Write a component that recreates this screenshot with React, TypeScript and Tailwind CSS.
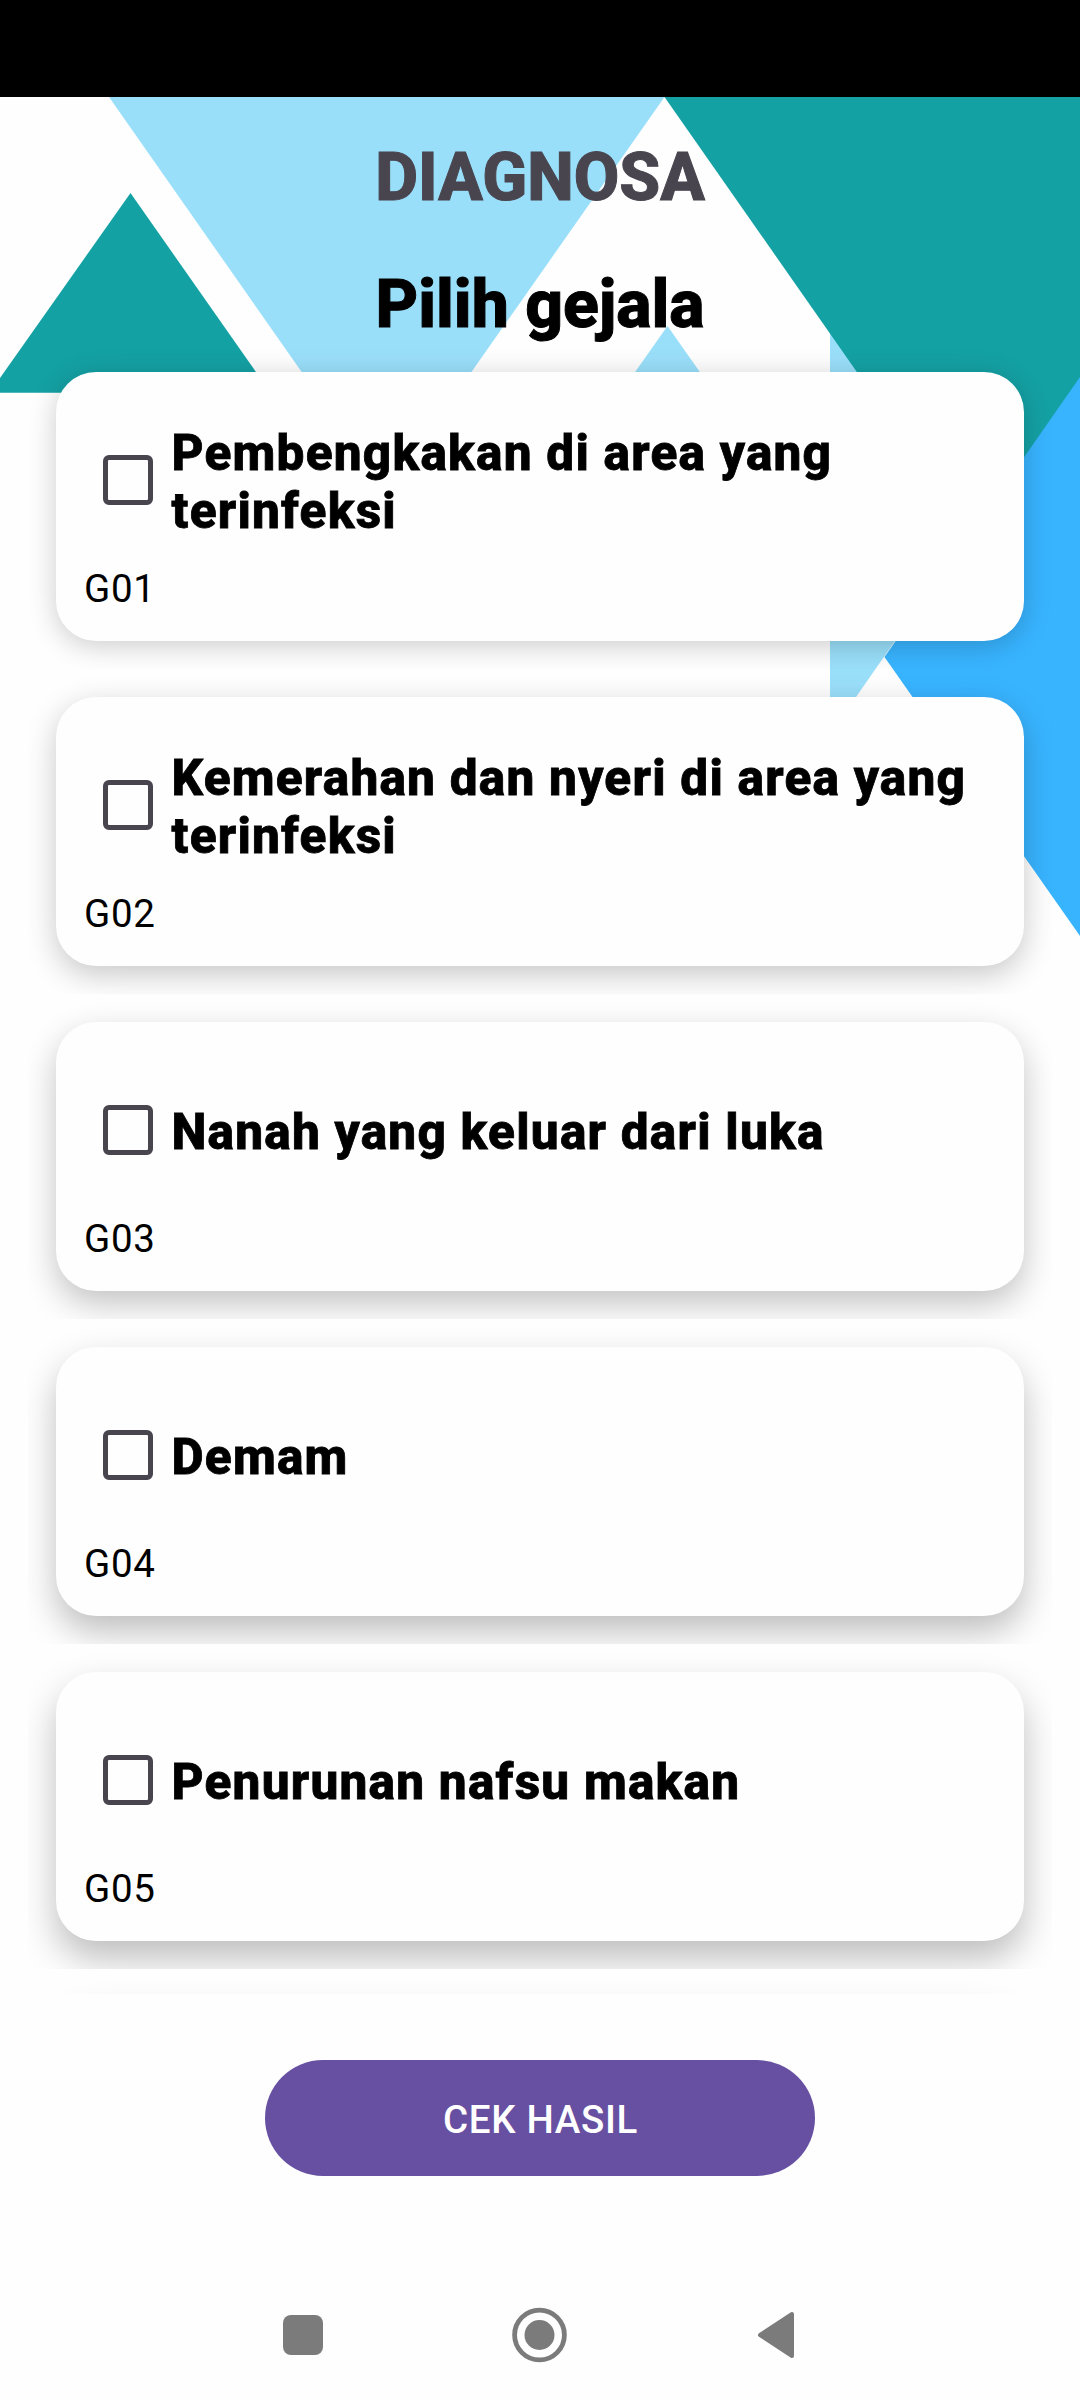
const symptoms = [
  { code: "G01", label: "Pembengkakan di area yang terinfeksi", shadow: "shadow-[0_5px_28px_rgba(0,0,0,0.2)]" },
  { code: "G02", label: "Kemerahan dan nyeri di area yang terinfeksi", shadow: "shadow-[0_9px_30px_rgba(0,0,0,0.215)]" },
  { code: "G03", label: "Nanah yang keluar dari luka", shadow: "shadow-[0_13px_33px_rgba(0,0,0,0.235)]" },
  { code: "G04", label: "Demam", shadow: "shadow-[0_16px_34px_rgba(0,0,0,0.25)]" },
  { code: "G05", label: "Penurunan nafsu makan", shadow: "shadow-[0_18px_36px_rgba(0,0,0,0.255)]" },
];

function Backdrop() {
  return (
    <svg className="absolute inset-x-0 top-0 -z-10" width="1080" height="1000" viewBox="0 0 1080 1000" aria-hidden="true">
      <path d="M109 97H664.5L386.5 493Z" fill="#9adffa" />
      <path d="M130.5 193L270.5 392.7H0V378Z" fill="#14a1a4" />
      <path d="M667.5 326L721 402H614Z" fill="#9adffa" />
      <path d="M830 320H900L950 562L856 697H830Z" fill="#9adffa" />
      <path d="M664.5 97H1080V400L980 548Z" fill="#14a1a4" />
      <path d="M1080 377V936L884.5 657Z" fill="#38b4ff" />
    </svg>
  );
}

function SymptomCard({ code, label, shadow }: { code: string; label: string; shadow: string }) {
  return (
    <li className="h-[325px] shrink-0 overflow-hidden p-7">
      <div className={`flex h-[269px] flex-col rounded-[40px] bg-[#fefefe] px-7 pt-7 ${shadow}`}>
        <label className="flex h-[166px] items-center pb-0.5">
          <span className="mb-1 ml-[19px] size-[50px] shrink-0 rounded-[6px] border-[5.5px] border-[#49454f]" />
          <span className="ml-[18.5px] text-[49.5px] leading-[58px] font-[850] tracking-[0.025em] [-webkit-text-stroke:0.8px_currentColor]">{label}</span>
        </label>
        <span className="text-[38.5px] leading-[45px] tracking-[0.0179em]">{code}</span>
      </div>
    </li>
  );
}

export default function App() {
  return (
    <div className="relative isolate flex h-[2400px] w-[1080px] flex-col overflow-hidden bg-[#fefefe] font-[Roboto,sans-serif] text-black">
      <Backdrop />
      <div className="h-[97px] shrink-0 bg-black" />
      <header className="flex h-[247px] shrink-0 flex-col items-center pt-[41.5px] font-[850] [-webkit-text-stroke:1px_currentColor]">
        <h1 className="text-[66px] leading-[78px] text-[#49454f] [-webkit-text-stroke-color:#49454f]">DIAGNOSA</h1>
        <h2 className="mt-[49px] text-[66px] leading-[78px]">Pilih gejala</h2>
      </header>
      <ul className="mx-7 flex h-[1650px] shrink-0 flex-col overflow-hidden">
        {symptoms.map((s) => (
          <SymptomCard key={s.code} {...s} />
        ))}
        <li className="shrink-0 px-7 pt-7">
          <div className="h-[269px] rounded-[40px] bg-[#fefefe] shadow-[0_20px_38px_rgba(0,0,0,0.16)]" />
        </li>
      </ul>
      <button className="mt-[66px] h-[116px] w-[550px] shrink-0 self-center rounded-full bg-[#6750a2] pt-0.5 pl-px text-[38.5px] leading-[45px] font-medium tracking-[0.0179em] text-white">
        CEK HASIL
      </button>
      <nav className="mt-auto flex h-[130px] shrink-0 items-center justify-between pr-[285px] pl-[282.5px]">
        <span className="size-[40px] rounded-[8px] bg-[#7b7b7b]" />
        <svg className="ml-[-1px]" width="56" height="56" viewBox="0 0 56 56" fill="none">
          <circle cx="28.5" cy="28" r="24.9" stroke="#7b7b7b" strokeWidth="4.8" />
          <circle cx="28.5" cy="28" r="15" fill="#7b7b7b" />
        </svg>
        <svg width="38" height="48" viewBox="0 0 38 48">
          <path d="M3 24L35 3V45Z" fill="#7b7b7b" stroke="#7b7b7b" strokeWidth="4" strokeLinejoin="round" />
        </svg>
      </nav>
    </div>
  );
}
